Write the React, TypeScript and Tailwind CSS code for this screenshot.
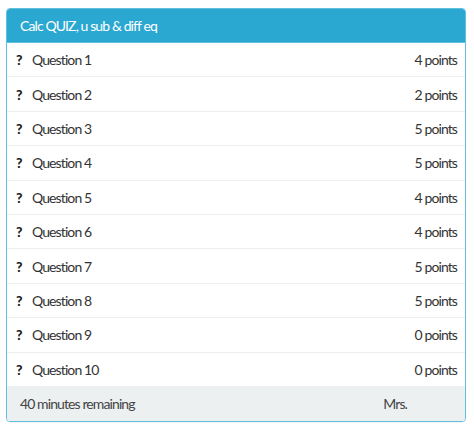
const questions = [
  { label: "Question 1", points: 4 },
  { label: "Question 2", points: 2 },
  { label: "Question 3", points: 5 },
  { label: "Question 4", points: 5 },
  { label: "Question 5", points: 4 },
  { label: "Question 6", points: 4 },
  { label: "Question 7", points: 5 },
  { label: "Question 8", points: 5 },
  { label: "Question 9", points: 0 },
  { label: "Question 10", points: 0 },
];

export default function App() {
  return (
    <div className="h-[428px] w-[474px] bg-white pl-[6px] pt-[8px] font-['Lato','Open_Sans',sans-serif] text-[14px] tracking-[-0.9px] text-[#333]">
      <div className="w-[460px] overflow-hidden rounded-[4px] border border-[#5fbfdc] shadow-[0_1px_1px_rgba(0,0,0,0.05)]">
        <div className="flex h-[33px] items-center bg-[#2ba8d1] px-[13px] text-white">
          Calc QUIZ, u sub &amp; diff eq
        </div>
        <ul>
          {questions.map((q, i) => (
            <li
              key={q.label}
              className={`flex h-[34.4px] items-center justify-between pl-[8px] pr-[8px] ${
                i === 0 ? "border-t border-[#5fbfdc]" : "border-t border-[#eeeeee]"
              }`}
            >
              <span className="flex items-baseline">
                <span className="w-[17px] pl-[1px] text-[14px] font-black text-[#222]">?</span>
                <span>{q.label}</span>
              </span>
              <span>{q.points} points</span>
            </li>
          ))}
        </ul>
        <div className="flex h-[35px] items-center justify-between bg-[#edf0f1] pl-[13px] pr-[58px] text-[#444]">
          <span>40 minutes remaining</span>
          <span>Mrs.</span>
        </div>
      </div>
    </div>
  );
}
